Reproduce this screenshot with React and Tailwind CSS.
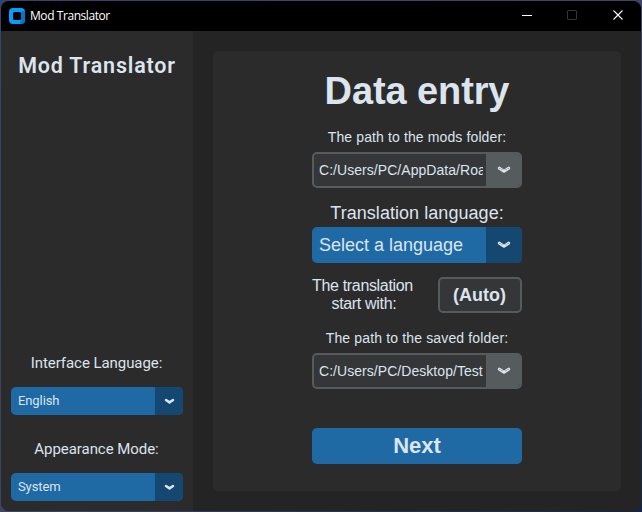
const ARIAL = 'font-["Liberation_Sans",Arial,sans-serif]'
const ROBOTO = 'font-[Roboto,sans-serif]'

function Chevron({ large = false }) {
  return large ? (
    <svg width="14" height="8" viewBox="0 0 14 8" fill="none" stroke="#dce4ee" strokeLinecap="round" strokeLinejoin="round">
      <path d="M2.4 2.2 L7 5.2 L11.6 2.2" strokeWidth="3.1" />
      <path d="M2.6 2.5 h0.4 M11 2.5 h0.4 M4.8 3.6 h0.4 M8.8 3.6 h0.4" stroke="#7b8287" strokeWidth="0.9" />
    </svg>
  ) : (
    <svg width="11" height="7" viewBox="0 0 11 7" fill="none" stroke="#dce4ee" strokeLinecap="round" strokeLinejoin="round">
      <path d="M2 2 L5.5 4.4 L9 2" strokeWidth="2.5" />
    </svg>
  )
}

function SideMenu({ value }) {
  return (
    <button className="flex h-7 w-[172px] overflow-hidden rounded-[5px] bg-[#1f6aa5] text-left">
      <span className="flex-1 pl-[7px] text-[13px] leading-[27px] tracking-[-0.1px] text-[#dce4ee]">{value}</span>
      <span className="flex w-7 items-center justify-center bg-[#144870] pt-px">
        <Chevron />
      </span>
    </button>
  )
}

function PathField({ value }) {
  return (
    <div className="flex h-9 w-full overflow-hidden rounded-[5px] border-2 border-[#565b5e] bg-[#343638]">
      <div className="w-[172px] pl-[5px] pr-[3px]">
        <div className="overflow-hidden whitespace-nowrap text-[14px] leading-8 tracking-[0.05px] text-[#dce4ee]">{value}</div>
      </div>
      <div className="flex flex-1 items-center justify-center bg-[#565b5e] pl-0.5">
        <Chevron large />
      </div>
    </div>
  )
}

function TitleBar() {
  return (
    <header className="flex h-[30px] shrink-0 items-center bg-black text-white">
      <svg className="ml-2" width="16" height="16" viewBox="0 0 16 16">
        <rect width="16" height="16" rx="4" fill="#0a9bff" />
        <path d="M12 4 L15.8 2.6 Q16 3 16 4 V12 A4 4 0 0 1 12 16 H11 L12 12 Z" fill="#0674c8" />
        <rect x="4" y="4" width="8" height="8" rx="1.5" fill="#000" />
      </svg>
      <span className='ml-[5px] flex-1 font-["Open_Sans","Noto_Sans",sans-serif] text-[12px] leading-4 tracking-[-0.43px]'>Mod Translator</span>
      <svg width="136" height="30" viewBox="0 0 136 30" fill="none">
        <path d="M17 14.5 H27" stroke="#fff" />
        <rect x="62.5" y="9.5" width="9" height="9" rx="0.5" stroke="#333" />
        <path d="M108.5 9.5 L117.5 18.5 M117.5 9.5 L108.5 18.5" stroke="#fff" strokeWidth="1.1" />
      </svg>
    </header>
  )
}

export default function App() {
  return (
    <div className="h-[512px] w-[642px] bg-linear-to-br from-[#30456e] via-[#40436a] to-[#172445] p-px">
      <div className="flex h-[510px] w-[640px] flex-col overflow-hidden rounded-lg bg-[#242424]">
        <TitleBar />
        <div className="flex flex-1">
          <aside className={`${ROBOTO} flex w-48 flex-col items-center bg-[#2b2b2b] pb-[10px] text-[#dce4ee]`}>
            <h1 className="mt-[23px] text-[21.5px] font-semibold leading-6 tracking-[0.8px]">Mod Translator</h1>
            <div className="mt-auto pr-px text-[15px] leading-5 tracking-[-0.06px]">Interface Language:</div>
            <div className="mt-[14px] flex">
              <SideMenu value="English" />
            </div>
            <div className="mt-6 pr-px text-[15px] leading-5 tracking-[-0.05px]">Appearance Mode:</div>
            <div className="mt-[14px] flex">
              <SideMenu value="System" />
            </div>
          </aside>
          <main className="flex-1 p-5">
            <section className={`${ARIAL} flex h-[440px] w-[408px] flex-col items-center rounded-[5px] bg-[#2b2b2b] text-[#dce4ee]`}>
              <div className="flex w-[210px] flex-col items-center whitespace-nowrap pt-[19px]">
                <h2 className="text-[38px] font-bold leading-[42px] tracking-[-0.1px]">Data entry</h2>
                <div className="mt-4 h-6 text-[14px] leading-[18px] tracking-[0.12px]">The path to the mods folder:</div>
                <PathField value="C:/Users/PC/AppData/Roaming" />
                <div className="mt-[15px] text-[18px] leading-5 tracking-[0.05px]">Translation language:</div>
                <button className="mt-1 flex h-9 w-full overflow-hidden rounded-[5px] bg-[#1f6aa5] text-left">
                  <span className="w-[174px] pl-[7px] text-[18px] leading-9">Select a language</span>
                  <span className="flex flex-1 items-center justify-center bg-[#144870]">
                    <Chevron large />
                  </span>
                </button>
                <div className="mt-[14px] flex h-9 w-full items-center justify-between">
                  <div className="text-center text-[16px] leading-[18px] tracking-[-0.33px]">
                    The translation
                    <br />
                    <span className="pl-[3px]">start with:</span>
                  </div>
                  <button className="h-9 w-[84px] rounded-[5px] border-2 border-[#565b5e] bg-[#343638] pr-px text-[18px] font-bold leading-8">(Auto)</button>
                </div>
                <div className="mt-4 h-6 text-[14px] leading-[18px] tracking-[0.15px]">The path to the saved folder:</div>
                <PathField value="C:/Users/PC/Desktop/Test" />
                <button className="mt-[39px] h-9 w-full rounded-[5px] bg-[#1f6aa5] text-[22px] font-bold leading-9">Next</button>
              </div>
            </section>
          </main>
        </div>
      </div>
    </div>
  )
}
